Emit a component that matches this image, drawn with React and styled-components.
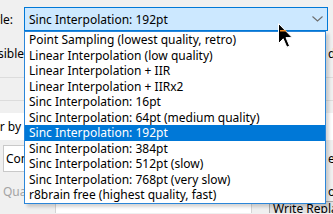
import React from "react";
import styled, { createGlobalStyle } from "styled-components";

const GlobalStyle = createGlobalStyle`
  html, body {
    margin: 0;
    padding: 0;
  }
  body {
    background: #f0f0f0;
    font-family: "Noto Sans", "Open Sans", sans-serif;
    font-size: 12px;
    color: #000;
  }
`;

const Window = styled.div`
  position: relative;
  width: 333px;
  height: 214px;
  overflow: hidden;
  box-sizing: border-box;
  padding-top: 7px;
  display: flex;
  flex-direction: column;
  background: #f0f0f0;
`;

const Row = styled.div`
  display: grid;
  grid-template-columns: 24px 1fr 5px;
  align-items: center;
  height: ${({ h }) => h}px;
  margin-top: ${({ mt }) => mt || 0}px;
  background: ${({ fill }) => fill || "transparent"};
  flex: none;
`;

const SideLabel = styled.div`
  display: flex;
  justify-content: ${({ start }) => (start ? "flex-start" : "flex-end")};
  overflow: hidden;
  white-space: nowrap;
  color: ${({ muted }) => (muted ? "#a3a3a3" : "#000")};
  padding-left: ${({ inset }) => inset || 0}px;
  padding-right: ${({ gap }) => gap || 0}px;
`;

const Separator = styled.div`
  height: 1px;
  margin-top: ${({ mt }) => mt}px;
  background: #dcdcdc;
  flex: none;
`;

const Combo = styled.div`
  height: 24px;
  box-sizing: border-box;
  border: 1px solid #0078d7;
  background: #cce8ff;
  display: flex;
  align-items: center;
  justify-content: space-between;
  padding: 0 4px 0 4px;
  white-space: nowrap;
`;

const SelectBox = styled.div`
  margin-left: 3px;
  height: 100%;
  box-sizing: border-box;
  border: 1px solid #c9c9c9;
  border-right: none;
  background: #fff;
  display: flex;
  align-items: center;
  padding-left: 2px;
  overflow: hidden;
  white-space: nowrap;
`;

const BottomRow = styled.div`
  display: flex;
  margin-top: ${({ mt }) => mt}px;
  height: 12px;
  flex: none;
`;

const TableCell = styled.div`
  margin-left: 55px;
  width: 195px;
  border-left: 1px solid #d4d4d4;
  border-right: 1px solid #d4d4d4;
  background: #fff;
`;

const WriteButton = styled.div`
  margin-left: 17px;
  flex: 1;
  border-left: 1px solid #adadad;
  border-top: 1px solid #adadad;
  background: #e1e1e1;
  padding-left: 3px;
  line-height: 14px;
  white-space: nowrap;
  overflow: hidden;
`;

const Popup = styled.ul`
  position: absolute;
  left: 24px;
  top: 31px;
  width: 302px;
  margin: 0;
  padding: 0;
  list-style: none;
  box-sizing: border-box;
  border: 1px solid #2b86d9;
  background: #fff;
  box-shadow: 3px 3px 3px rgba(0, 0, 0, 0.16);
`;

const Option = styled.li`
  height: 15.5px;
  line-height: 15.5px;
  padding-left: 4px;
  white-space: nowrap;
  background: ${({ selected }) => (selected ? "#0078d7" : "transparent")};
  color: ${({ selected }) => (selected ? "#fff" : "#000")};
`;

const Pointer = styled.svg`
  position: absolute;
  left: 278px;
  top: 23px;
`;

const options = [
  "Point Sampling (lowest quality, retro)",
  "Linear Interpolation (low quality)",
  "Linear Interpolation + IIR",
  "Linear Interpolation + IIRx2",
  "Sinc Interpolation: 16pt",
  "Sinc Interpolation: 64pt (medium quality)",
  "Sinc Interpolation: 192pt",
  "Sinc Interpolation: 384pt",
  "Sinc Interpolation: 512pt (slow)",
  "Sinc Interpolation: 768pt (very slow)",
  "r8brain free (highest quality, fast)",
];

const selectedIndex = 6;

const Chevron = () => (
  <svg width="11" height="6" viewBox="0 0 11 6">
    <path d="M0.5 0.5 L5.5 5 L10.5 0.5" fill="none" stroke="#6d6d6d" strokeWidth="1.1" />
  </svg>
);

export default function App() {
  return (
    <>
      <GlobalStyle />
      <Window>
        <Row h={24}>
          <SideLabel gap={11}>Style:</SideLabel>
          <Combo>
            <span>{options[selectedIndex]}</span>
            <Chevron />
          </Combo>
          <div />
        </Row>

        <Row h={14} mt={15}>
          <SideLabel>Possible</SideLabel>
          <div />
          <SideLabel start>d</SideLabel>
        </Row>

        <Separator mt={17} />
        <Separator mt={22} />

        <Row h={27} mt={12} fill="#fff">
          <SideLabel gap={3}>Filter by</SideLabel>
          <div />
          <div />
        </Row>

        <Row h={27} mt={5}>
          <SelectBox>Compact</SelectBox>
          <div />
          <SideLabel start>e</SideLabel>
        </Row>

        <Row h={12} mt={13}>
          <SideLabel muted start inset={3}>
            Quality
          </SideLabel>
          <div />
          <SideLabel start>o</SideLabel>
        </Row>

        <BottomRow mt={4}>
          <TableCell />
          <WriteButton>Write Replay Gain</WriteButton>
        </BottomRow>

        <Popup>
          {options.map((o, i) => (
            <Option key={o} selected={i === selectedIndex}>
              {o}
            </Option>
          ))}
        </Popup>

        <Pointer width="16" height="26" viewBox="0 0 16 26">
          <path
            d="M0.5 0.5 L0.5 20.5 L5.2 15.8 L8.8 24.2 L11.6 23 L8 14.6 L14.2 14.6 Z"
            fill="#000"
            stroke="#fff"
            strokeWidth="1"
          />
          <path d="M2 7 L7.5 7 L9 8.6 L2 8.6 Z" fill="#f08a24" />
        </Pointer>
      </Window>
    </>
  );
}
